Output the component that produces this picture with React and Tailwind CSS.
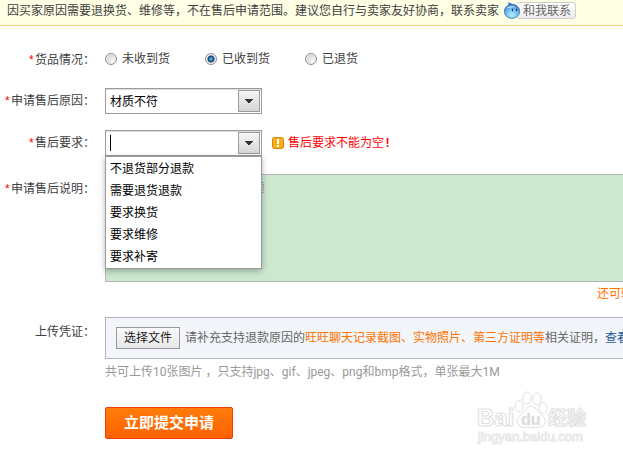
import { useState } from "react";

const conditions = ["未收到货", "已收到货", "已退货"];

const demands = [
  "不退货部分退款",
  "需要退货退款",
  "要求换货",
  "要求维修",
  "要求补寄",
];

const Row = ({ label, htmlFor, required, className = "", children }) => (
  <div className={`flex gap-[10px] ${className}`}>
    <label htmlFor={htmlFor} className="w-[95px] shrink-0 pt-px text-right whitespace-nowrap">
      {required && <span className="font-['Liberation_Mono',monospace] text-[#ff0000]">*</span>}
      {label}：
    </label>
    <div className="min-w-0 flex-1">{children}</div>
  </div>
);

const ComboBox = ({ id, value, onChange, focused, onToggle, children }) => (
  <div className="relative w-[157px]">
    <div className="flex h-[26px] border border-[#9b9b9b] bg-white p-px shadow-[inset_0_1px_0_#ddd]">
      <div className="flex min-w-0 flex-1 items-center pl-[3px]">
        {focused && <span className="h-4 w-px shrink-0 bg-black" />}
        <input
          id={id}
          type="text"
          value={value}
          onChange={(e) => onChange(e.target.value)}
          autoComplete="off"
          className="w-full min-w-0 bg-transparent pt-0.5 text-black outline-none"
        />
      </div>
      <button
        type="button"
        aria-label="展开"
        onClick={onToggle}
        className="flex w-[22px] shrink-0 items-center justify-center border border-[#9b9b9b] bg-linear-to-b from-[#f6f6f6] to-[#d6d6d6]"
      >
        <svg width="8" height="4" viewBox="0 0 8 4" fill="#333">
          <path d="M0 0h8v1H7v1H6v1H5v1H3V3H2V2H1V1H0z" />
        </svg>
      </button>
    </div>
    {children}
  </div>
);

const WangWang = () => (
  <svg width="16" height="17" viewBox="0 0 16 17" className="relative z-10 shrink-0">
    <defs>
      <radialGradient id="ww" cx="50%" cy="80%" r="75%">
        <stop offset="0" stopColor="#b9ebfd" />
        <stop offset="0.5" stopColor="#78c0ee" />
        <stop offset="1" stopColor="#2a6fb8" />
      </radialGradient>
    </defs>
    <path
      d="M4.600.6C5.800 2 8 2 10.500 2.600 13.500 3.600 15.600 6 15.600 9.200c0 4.200-3.400 7.200-7.600 7.200S.4 13.500.4 9.400C.4 6.500 2 4.300 4.600 3.300 4.900 2.500 4.800 1.600 4.600.6z"
      fill="url(#ww)"
      stroke="#3a74ae"
      strokeWidth="0.8"
    />
    <path d="M2.500 6.500C4 4.300 8.500 3.400 12.500 5.500 9.500 5 5.500 5.200 2.500 6.500z" fill="#d5ecfa" />
    <ellipse cx="8.500" cy="8" rx="0.700" ry="1.400" fill="#123e70" />
    <ellipse cx="12.500" cy="8" rx="0.700" ry="1.400" fill="#123e70" />
  </svg>
);

const Watermark = () => (
  <svg
    width="116"
    height="58"
    viewBox="0 0 116 58"
    className="pointer-events-none absolute right-[31px] bottom-[10px]"
    fill="#fff"
    stroke="#e0e0e0"
    strokeWidth="1"
    fontFamily='"Liberation Sans", "Noto Sans CJK SC", sans-serif'
  >
    <text x="1" y="35" fontSize="24" fontWeight="bold">Bai</text>
    <ellipse cx="43" cy="15" rx="4" ry="5.500" />
    <ellipse cx="51" cy="7" rx="4.200" ry="6" />
    <ellipse cx="61" cy="8" rx="4.200" ry="6" />
    <ellipse cx="67" cy="17" rx="4" ry="5.500" />
    <path d="M55 15.500c4.500 0 6 4 9.500 7.500 3.500 3 6 6 4 10-2 4.500-7 3.500-13 3.500s-11.500 1-13.500-3.500c-2-4 0-7 3.500-10 3.500-3.500 5-7.500 9.500-7.500z" />
    <text x="45" y="34" fontSize="16" fontWeight="bold" fill="#dadada" stroke="#e6e6e6" strokeWidth="0.500">du</text>
    <text x="72" y="34" fontSize="19" fontWeight="bold">经验</text>
    <text x="2" y="50" fontSize="13" stroke="#e8e8e8">jingyan.baidu.com</text>
  </svg>
);

export default function App() {
  const [condition, setCondition] = useState("已收到货");
  const [reason, setReason] = useState("材质不符");
  const [demand, setDemand] = useState("");
  const [open, setOpen] = useState(true);

  return (
    <div className="relative w-full overflow-hidden bg-white pb-5 font-['Liberation_Sans','Noto_Sans_CJK_SC',sans-serif] text-[12px] leading-[18px] text-[#404040]">
      <div className="flex h-[26px] items-start border-b border-[#ffcc88] bg-[#ffffe5] pt-[2px] pl-[7px] whitespace-nowrap">
        <p>因买家原因需要退换货、维修等，不在售后申请范围。建议您自行与卖家友好协商，联系卖家</p>
        <a href="#" className="ml-[5px] flex items-center text-[#666]">
          <WangWang />
          <span className="-ml-1 h-[17px] rounded-sm border border-[#cfcfcf] border-l-transparent bg-linear-to-b from-white to-[#ececec] pr-1 pl-1.5 leading-4">
            和我联系
          </span>
        </a>
      </div>

      <form onSubmit={(e) => e.preventDefault()}>
        <Row label="货品情况" required className="mt-6">
          <div className="flex">
            {conditions.map((item) => (
              <label key={item} className="flex w-[100px] items-center gap-[5px] whitespace-nowrap">
                <input
                  type="radio"
                  name="condition"
                  checked={condition === item}
                  onChange={() => setCondition(item)}
                  className="size-3 shrink-0 appearance-none rounded-full border border-[#909090] bg-[radial-gradient(circle_at_70%_70%,#f8f8f8,#c8c8c8)] shadow-[inset_0_0_0_1px_#f0f0f0] checked:bg-[radial-gradient(circle,#42a8dc_0_1px,#123d68_3px,#e4e4e4_4px)]"
                />
                {item}
              </label>
            ))}
          </div>
        </Row>

        <Row label="申请售后原因" htmlFor="reason" required className="mt-[18px] items-center">
          <ComboBox id="reason" value={reason} onChange={setReason} />
        </Row>

        <Row label="售后要求" htmlFor="demand" required className="mt-4 items-center">
          <div className="flex items-center gap-[10px]">
            <ComboBox
              id="demand"
              value={demand}
              onChange={setDemand}
              focused
              onToggle={() => setOpen(!open)}
            >
              {open && (
                <ul
                  role="listbox"
                  className="absolute top-full left-0 z-10 w-full border border-[#9b9b9b] bg-white pt-px shadow-[0_2px_6px_rgba(0,0,0,0.3)]"
                >
                  {demands.map((item) => (
                    <li
                      key={item}
                      role="option"
                      aria-selected={demand === item}
                      onClick={() => {
                        setDemand(item);
                        setOpen(false);
                      }}
                      className="cursor-default pl-1 leading-[22px] text-black"
                    >
                      {item}
                    </li>
                  ))}
                </ul>
              )}
            </ComboBox>
            <p className="flex items-center gap-1 whitespace-nowrap text-[#ff0000]">
              <svg width="12" height="12" viewBox="0 0 12 12">
                <rect x="0.500" y="0.500" width="11" height="11" rx="2" fill="#fbae17" stroke="#d5800f" />
                <path d="M5 2h2v5H5zM5 8h2v2H5z" fill="#fff" />
              </svg>
              <span>
                售后要求不能为空<b className="font-['Liberation_Mono',monospace]">!</b>
              </span>
            </p>
          </div>
        </Row>

        <Row label="申请售后说明" htmlFor="detail" required className="mt-[18px] leading-7">
          <textarea
            id="detail"
            placeholder="请在此填写申请售后具体问题"
            className="block h-[108px] w-full resize-none border border-r-0 border-[#b5b5b5] bg-[#cce8cf] px-[3px] py-1 leading-[18px] outline-none placeholder:text-[#999]"
          />
        </Row>
        <div className="flex justify-end">
          <p className="mt-[3px] w-[26px] whitespace-nowrap text-[#ff7300]">还可输入</p>
        </div>

        <Row label="上传凭证" htmlFor="choose" className="mt-[14px] leading-7">
          <div className="flex h-[42px] items-center gap-[5px] border border-r-0 border-[#b4b4bc] bg-[#f2f6fa] pl-[10px] leading-[18px] whitespace-nowrap text-[#666]">
            <button
              id="choose"
              type="button"
              className="h-[22px] w-16 shrink-0 border border-[#999] bg-linear-to-b from-[#fafafa] to-[#e8e8e8] text-[#222]"
            >
              选择文件
            </button>
            <p>
              请补充支持退款原因的
              <span className="text-[#ff7300]">旺旺聊天记录截图、实物照片、第三方证明等</span>
              相关证明，
              <a href="#" className="text-[#1f5a96]">查看示例</a>
            </p>
          </div>
          <p className="mt-1 font-[Roboto,'Noto_Sans_CJK_SC',sans-serif] leading-[18px] text-[#999]">
            共可上传10张图片 ，只支持jpg、gif、jpeg、png和bmp格式，单张最大1M
          </p>
          <button
            type="submit"
            className="mt-[26px] block h-8 w-32 rounded-xs border border-[#ee3f00] bg-linear-to-b from-[#ff7c0a] to-[#ff6000] text-[15px] leading-[30px] font-bold text-white"
          >
            立即提交申请
          </button>
        </Row>
      </form>

      <Watermark />
    </div>
  );
}
